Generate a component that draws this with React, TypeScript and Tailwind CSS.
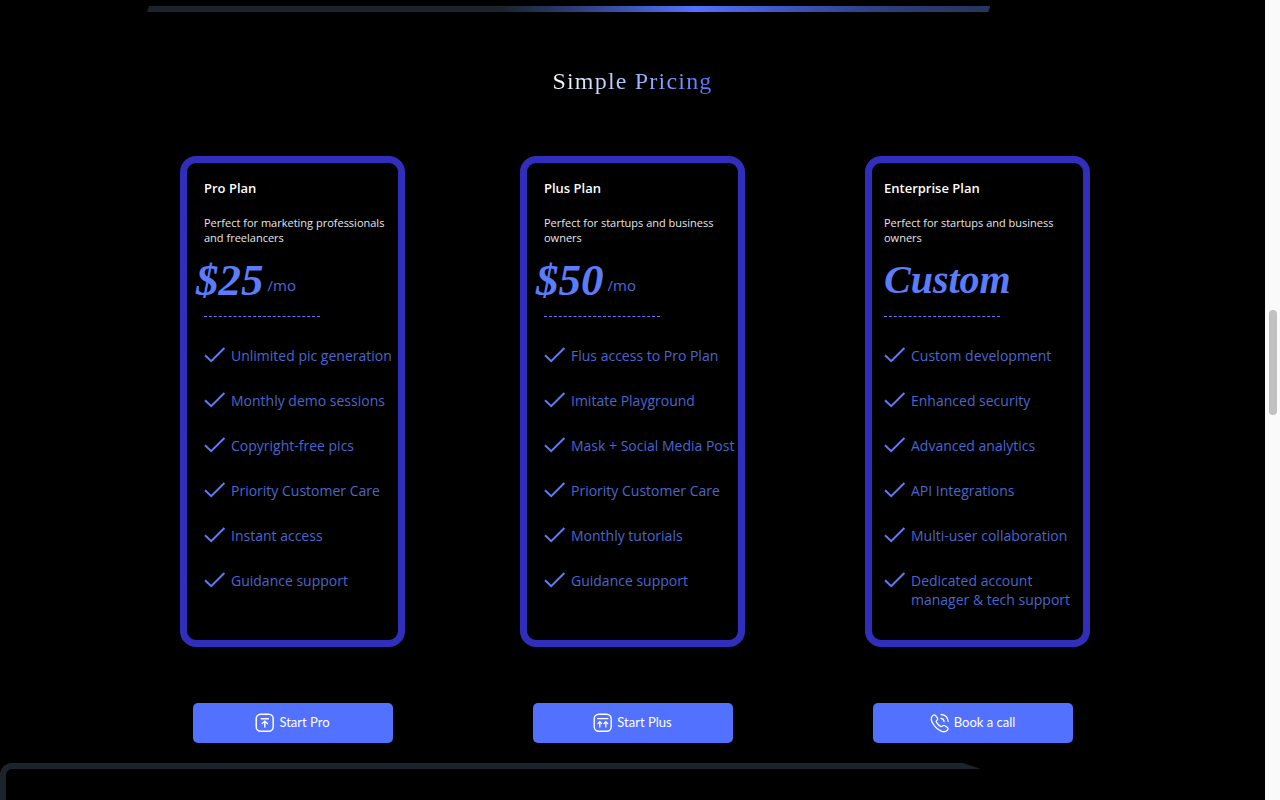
import clsx from 'clsx';

type IconProps = { className?: string };

const CheckIcon = ({ className }: IconProps) => (
  <svg viewBox="0 0 22 16" fill="none" stroke="currentColor" strokeWidth="2" className={className} aria-hidden="true">
    <path d="M1 8.2 7.2 14.2 20.4 1" />
  </svg>
);

const ArrowBoxIcon = ({ className }: IconProps) => (
  <svg viewBox="0 0 20 20" fill="none" stroke="currentColor" strokeLinecap="round" className={className} aria-hidden="true">
    <rect x="1.2" y="1.2" width="17" height="17" rx="4.5" strokeWidth="1.5" />
    <path d="M6.2 5.7h7.2M9.8 14V8.6M7.2 10.6l2.6-2.4 2.6 2.4" strokeWidth="1.4" />
  </svg>
);

const DoubleArrowBoxIcon = ({ className }: IconProps) => (
  <svg viewBox="0 0 20 20" fill="none" stroke="currentColor" strokeLinecap="round" className={className} aria-hidden="true">
    <rect x="1.2" y="1.2" width="17" height="17" rx="4.5" strokeWidth="1.4" />
    <path d="M4.6 5.6h10.4M6.8 14V8.8M4.9 10.6l1.9-2 1.9 2M12.8 14V8.8M10.9 10.6l1.9-2 1.9 2" strokeWidth="1.3" />
  </svg>
);

const CallIcon = ({ className }: IconProps) => (
  <svg viewBox="0 0 20 20" fill="none" stroke="currentColor" strokeWidth="1.3" strokeLinecap="round" strokeLinejoin="round" className={className} aria-hidden="true">
    <path d="M2.2 3.2C3.4 1.6 4.8 1.5 5.8 2.8l1.5 2.1c.7 1 .3 1.9-.6 2.6-.7.6-.6 1.2 0 2.1.9 1.4 2 2.5 3.4 3.5.9.7 1.5.8 2.2 0 .7-.8 1.6-1 2.6-.3l2.3 1.5c1.3.9 1.3 2-.1 3.2-1.5 1.4-3.9 1.6-6.4.3C6.9 16 4 12.9 2.1 9 .9 6.600 1 4.700 2.200 3.200Z" />
    <path d="M10.8 5.4c1.8.1 3.1 1.4 3.3 3.3M11.2 1.5c3.9.3 6.6 3 7 6.9" />
  </svg>
);

const plans = [
  {
    name: 'Pro Plan',
    description: 'Perfect for marketing professionals and freelancers',
    price: '$25',
    monthly: true,
    features: [
      'Unlimited pic generation',
      'Monthly demo sessions',
      'Copyright-free pics',
      'Priority Customer Care',
      'Instant access',
      'Guidance support',
    ],
  },
  {
    name: 'Plus Plan',
    description: 'Perfect for startups and business owners',
    price: '$50',
    monthly: true,
    features: [
      'Flus access to Pro Plan',
      'Imitate Playground',
      'Mask + Social Media Post',
      'Priority Customer Care',
      'Monthly tutorials',
      'Guidance support',
    ],
  },
  {
    name: 'Enterprise Plan',
    description: 'Perfect for startups and business owners',
    price: 'Custom',
    monthly: false,
    features: [
      'Custom development',
      'Enhanced security',
      'Advanced analytics',
      'API Integrations',
      'Multi-user collaboration',
      'Dedicated account manager & tech support',
    ],
  },
];

const actions = [
  { label: 'Start Pro', Icon: ArrowBoxIcon },
  { label: 'Start Plus', Icon: DoubleArrowBoxIcon },
  { label: 'Book a call', Icon: CallIcon },
];

const PlanCard = ({ plan }: { plan: (typeof plans)[number] }) => (
  <article
    className={clsx(
      'w-full max-w-[225px] rounded-2xl border-[7px] border-[#312ebb] pt-[15px] pb-6',
      plan.monthly ? 'pl-[17px]' : 'pl-3'
    )}
  >
    <h3 className="text-[13px] leading-5 font-semibold text-white">{plan.name}</h3>
    <p className="mt-[17px] text-[11px] leading-[15px] text-gray-200">{plan.description}</p>

    <p className={clsx('mt-2 flex items-end text-[#5c7cfa]', plan.monthly && '-ml-2')}>
      <span
        className={clsx(
          "font-['Liberation_Serif',serif] leading-[54px] font-bold italic",
          plan.monthly ? 'text-[45px]' : 'text-[40px]'
        )}
      >
        {plan.price}
      </span>
      {plan.monthly && <span className="mb-[10px] ml-1 text-[15px] leading-6 text-[#4d6ad6]">/mo</span>}
    </p>
    <hr className="mt-[9px] w-[116px] border-dashed border-[#5c7cfa]" />

    <ul className="mt-[29px] text-sm leading-[19px] text-[#4a66cf]">
      {plan.features.map((feature) => (
        <li key={feature} className="flex h-[45px] items-start gap-[5px]">
          <CheckIcon className="mt-px h-4 w-[22px] shrink-0 text-[#5c7cfa]" />
          <span className="flex-1">{feature}</span>
        </li>
      ))}
    </ul>
  </article>
);

const App = () => {
  return (
    <div className="flex h-screen overflow-hidden bg-black font-['Open_Sans',sans-serif]">
      <main className="flex min-w-0 flex-1 flex-col pt-[6px]">
        <div className="ml-[147px] h-[6px] w-2/3 shrink-0 bg-[linear-gradient(90deg,#1b242b_42%,#2a3b72_50%,#5271ff_65%,#3a50b4_78%,#2a3f7a_88%,#27355c)] [clip-path:polygon(2px_0,100%_0,calc(100%-2px)_100%,0_100%)]" />

        <section className="pt-[53px]">
          <h2 className="mx-auto w-fit bg-linear-to-r from-white to-[#5271ff] bg-clip-text font-['Liberation_Serif',serif] text-2xl leading-8 tracking-wider text-transparent">
            Simple Pricing
          </h2>

          <div className="mx-auto mt-[59px] grid max-w-[915px] grid-cols-[340fr_345fr_225fr] pl-[5px]">
            {plans.map((plan) => (
              <PlanCard key={plan.name} plan={plan} />
            ))}
          </div>

          <div className="mx-auto mt-14 flex max-w-[880px] justify-between font-['Lato',sans-serif]">
            {actions.map(({ label, Icon }) => (
              <button
                key={label}
                type="button"
                className="flex h-10 w-[200px] items-center justify-center gap-1 rounded-[5px] bg-[#5271ff] text-[13px] text-white"
              >
                <Icon className="size-5" />
                {label}
              </button>
            ))}
          </div>
        </section>

        <div className="mt-5 w-full max-w-[981px] flex-1 rounded-tl-xl border-t-[6px] border-l-[6px] border-[#1b242b] [clip-path:polygon(0_0,calc(100%-18px)_0,100%_6px,100%_100%,0_100%)]" />
      </main>

      <div className="flex w-[15px] justify-center bg-[#fafafa] pt-[310px]">
        <div className="h-[105px] w-2 rounded-full bg-[#c1c1c1]" />
      </div>
    </div>
  );
};

export default App;
